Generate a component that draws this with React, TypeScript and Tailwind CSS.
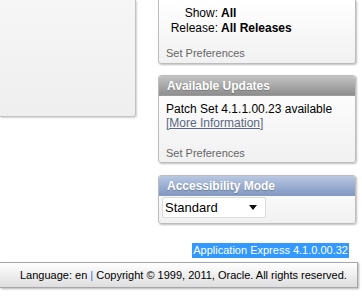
import React from "react";

function Panel({
  title,
  tone,
  children,
  className = "",
}: {
  title: string;
  tone: "gray" | "blue";
  children: React.ReactNode;
  className?: string;
}) {
  const head =
    tone === "gray"
      ? "bg-gradient-to-b from-[#c4c4c4] to-[#8e8e8e] border-[#9a9a9a]"
      : "bg-gradient-to-b from-[#b9c8e2] to-[#8299c2] border-[#8a9cbf]";
  return (
    <div
      className={`rounded-[3px] border border-[#bdbdbd] bg-gradient-to-b from-white to-[#f1f1f1] shadow-[1px_1px_2px_rgba(0,0,0,0.25)] ${className}`}
    >
      <div
        className={`h-[20px] rounded-t-[2px] border-b pl-[8px] text-[12px] font-bold leading-[20px] text-white [text-shadow:0_1px_1px_rgba(0,0,0,0.25)] ${head}`}
      >
        {title}
      </div>
      {children}
    </div>
  );
}

export default function App() {
  return (
    <div className="relative h-[298px] w-[362px] overflow-hidden bg-white font-['Liberation_Sans',Arial,sans-serif] text-[12px] text-black">
      <div className="flex items-start">
        {/* left region, cut off at top-left */}
        <div className="h-[117px] w-[136px] rounded-br-[3px] border-b border-r border-[#c2c2c2] bg-gradient-to-b from-[#f6f6f6] to-[#efefef] shadow-[1px_1px_2px_rgba(0,0,0,0.18)]" />

        <div className="ml-[22px] flex w-[198px] flex-col">
          {/* report preferences */}
          <div className="h-[64px] rounded-b-[3px] border-x border-b border-[#bdbdbd] bg-gradient-to-b from-white to-[#f1f1f1] shadow-[1px_1px_2px_rgba(0,0,0,0.25)]">
            <div className="grid grid-cols-[53px_1fr] gap-x-[3px] pl-[6px] pt-[6px] leading-[15px]">
              <span className="text-right">Show:</span>
              <span className="font-bold">All</span>
              <span className="text-right">Release:</span>
              <span className="font-bold">All Releases</span>
            </div>
            <div className="pl-[7px] pt-[11px] text-[11px] leading-[13px] text-[#666]">Set Preferences</div>
          </div>

          <Panel title="Available Updates" tone="gray" className="mt-[11px] h-[88px]">
            <div className="pl-[7px] pt-[6px] leading-[14px]">
              <div>Patch Set 4.1.1.00.23 available</div>
              <div className="text-[#5b6783] underline">[More Information]</div>
            </div>
            <div className="pl-[7px] pt-[17px] text-[11px] leading-[13px] text-[#666]">Set Preferences</div>
          </Panel>

          <Panel title="Accessibility Mode" tone="blue" className="mt-[12px] h-[49px]">
            <div className="pl-[3px] pt-[1px]">
              <div className="flex h-[21px] w-[104px] items-center justify-between rounded-[2px] border border-[#dcdcdc] bg-white pl-[2px] pr-[8px] text-[13px]">
                <span>Standard</span>
                <svg width="8" height="5" viewBox="0 0 8 5">
                  <path d="M0 0h8L4 5z" fill="#111" />
                </svg>
              </div>
            </div>
          </Panel>
        </div>
      </div>

      <div className="mt-[19px] flex justify-end pr-[13px] text-[11px]">
        <span className="bg-[#3399ff] px-[1px] leading-[15px] text-white">Application Express 4.1.0.00.32</span>
      </div>

      <div className="mt-[4px] flex h-[26px] w-[358px] items-center whitespace-nowrap border-y border-r border-[#a8a8a8] bg-gradient-to-b from-white to-[#dedede] pl-[20px] text-[11px] shadow-[1px_1px_2px_rgba(0,0,0,0.3)]">
        <span>
          Language: en <span className="text-[#2f6fd1]">|</span> Copyright © 1999, 2011, Oracle. All rights reserved.
        </span>
      </div>
    </div>
  );
}
